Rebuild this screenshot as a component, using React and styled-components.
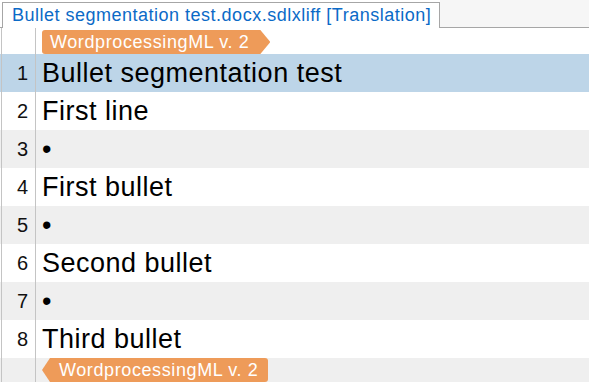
import React from "react";
import styled, { createGlobalStyle } from "styled-components";

const Global = createGlobalStyle`
  html, body {
    margin: 0;
    padding: 0;
    background: #ffffff;
    overflow: hidden;
  }
  body {
    font-family: "Liberation Sans", Arial, sans-serif;
  }
`;

const rows = [
  { n: 1, text: "Bullet segmentation test", tone: "active" },
  { n: 2, text: "First line", tone: "plain" },
  { n: 3, text: "•", tone: "grey" },
  { n: 4, text: "First bullet", tone: "plain" },
  { n: 5, text: "•", tone: "grey" },
  { n: 6, text: "Second bullet", tone: "plain" },
  { n: 7, text: "•", tone: "grey" },
  { n: 8, text: "Third bullet", tone: "plain" },
];

const tones = {
  active: "#bdd5e8",
  grey: "#efefef",
  plain: "#ffffff",
};

export default function App() {
  return (
    <>
      <Global />
      <Editor>
        <TabStrip>
          <TabGap />
          <Tab>Bullet segmentation test.docx.sdlxliff [Translation]</Tab>
          <TabFill />
        </TabStrip>
        <Row $h={26} $tone="plain">
          <NumCell />
          <Cell $align="flex-start">
            <TagStart>WordprocessingML v. 2</TagStart>
          </Cell>
        </Row>
        {rows.map((r) => (
          <Row key={r.n} $h={38} $tone={r.tone}>
            <NumCell>{r.n}</NumCell>
            <Cell>
              <SegText>{r.text}</SegText>
            </Cell>
          </Row>
        ))}
        <Row $h={24} $tone="grey">
          <NumCell />
          <Cell>
            <TagEnd>WordprocessingML v. 2</TagEnd>
          </Cell>
        </Row>
      </Editor>
    </>
  );
}

const Editor = styled.div`
  width: 589px;
  height: 388px;
  display: flex;
  flex-direction: column;
  background: #ffffff;
`;

const TabStrip = styled.div`
  display: flex;
  height: 28px;
  flex-shrink: 0;
`;

const TabGap = styled.div`
  width: 2px;
  border-bottom: 1px solid #a6a6a6;
`;

const Tab = styled.div`
  margin-top: 2px;
  padding: 0 8px 0 9px;
  border: 1px solid #a6a6a6;
  border-bottom: none;
  background: #ffffff;
  color: #0b6ac7;
  font-size: 18px;
  letter-spacing: 0.5px;
  line-height: 24px;
  white-space: nowrap;
`;

const TabFill = styled.div`
  flex: 1;
  background: #f6f6f6;
  border-bottom: 1px solid #a6a6a6;
`;

const Row = styled.div`
  display: flex;
  height: ${(p) => p.$h}px;
  flex-shrink: 0;
  padding-left: 1px;
  background: ${(p) => tones[p.$tone]};
`;

const NumCell = styled.div`
  box-sizing: border-box;
  width: 35px;
  border-left: 1px solid #c4c4c4;
  border-right: 1px solid #c4c4c4;
  padding-right: 7px;
  display: flex;
  align-items: center;
  justify-content: flex-end;
  font-size: 20px;
  color: #111111;
`;

const Cell = styled.div`
  flex: 1;
  display: flex;
  align-items: ${(p) => p.$align || "center"};
  padding-left: 6px;
`;

const SegText = styled.span`
  font-size: 27px;
  letter-spacing: 0.5px;
  color: #000000;
  white-space: nowrap;
`;

const Tag = styled.div`
  height: 24px;
  display: flex;
  align-items: center;
  background: #ee9b59;
  color: #ffffff;
  font-size: 18px;
  letter-spacing: 0.6px;
  white-space: nowrap;
`;

const TagStart = styled(Tag)`
  margin-top: 2px;
  padding: 0 21px 0 8px;
  border-radius: 3px 0 0 3px;
  clip-path: polygon(0 0, calc(100% - 10px) 0, 100% 50%, calc(100% - 10px) 100%, 0 100%);
`;

const TagEnd = styled(Tag)`
  padding: 0 10px 0 17px;
  border-radius: 0 3px 3px 0;
  clip-path: polygon(8px 0, 100% 0, 100% 100%, 8px 100%, 0 50%);
`;
